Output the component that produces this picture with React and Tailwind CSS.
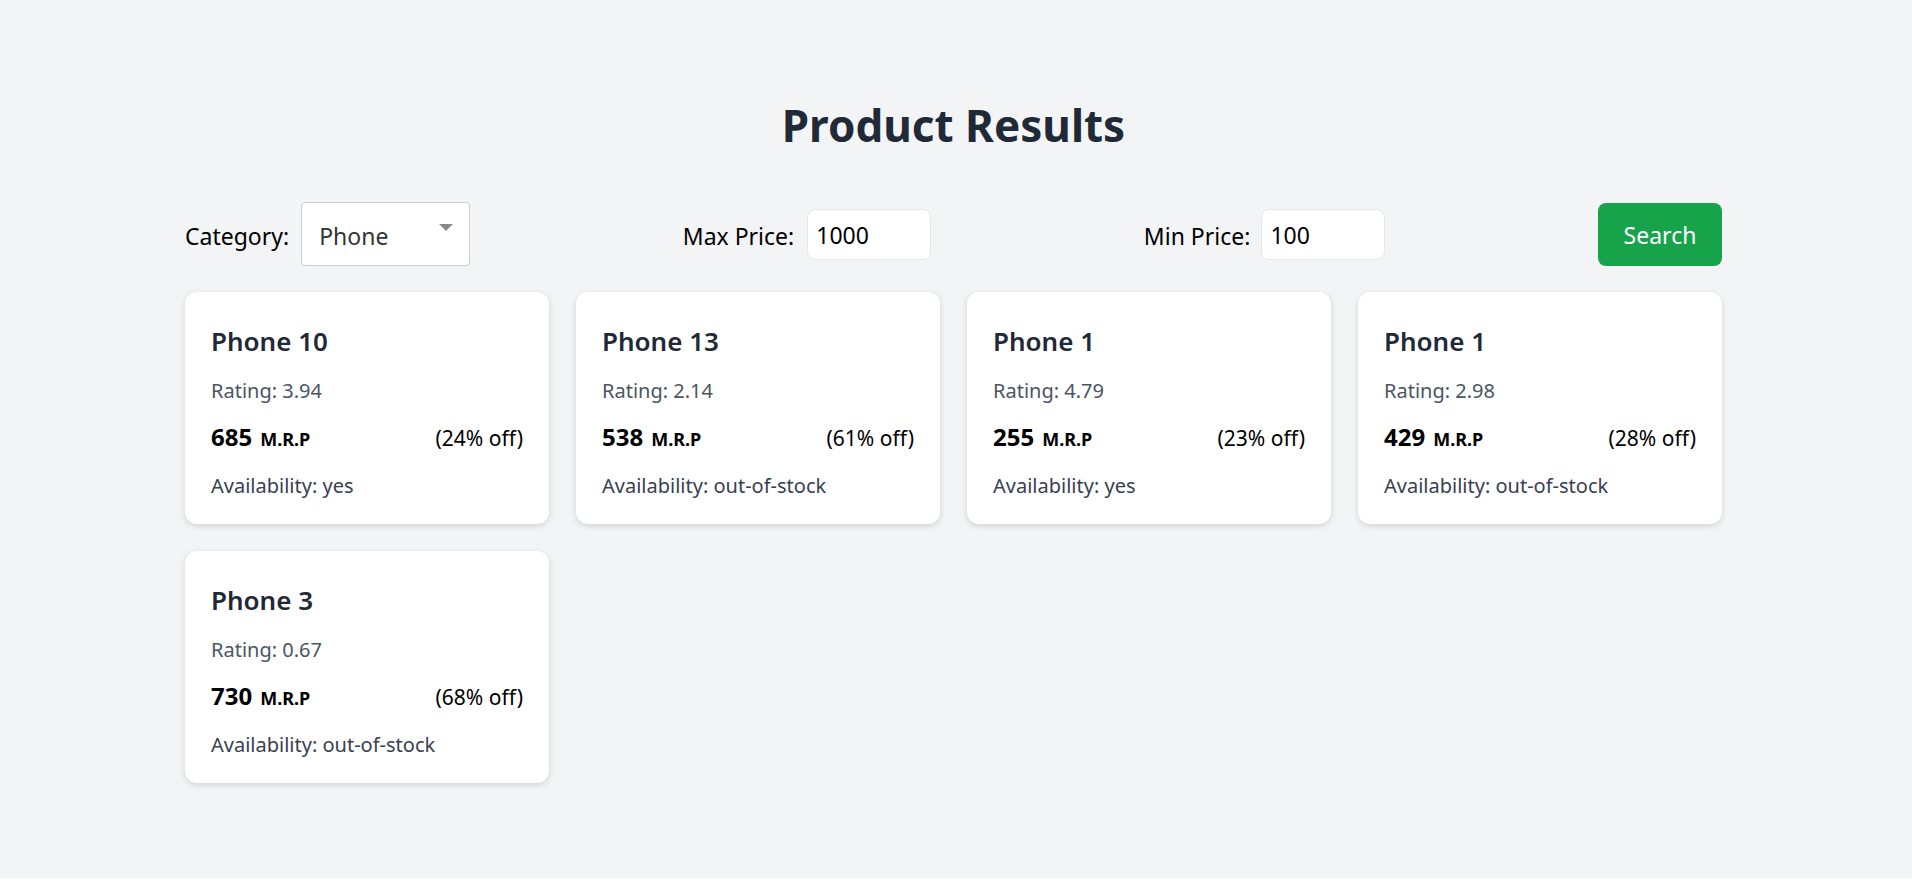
import React, { useState } from 'react';

const products = [
  { name: 'Phone 10', rating: 3.94, price: 685, discount: 24, availability: 'yes' },
  { name: 'Phone 13', rating: 2.14, price: 538, discount: 61, availability: 'out-of-stock' },
  { name: 'Phone 1', rating: 4.79, price: 255, discount: 23, availability: 'yes' },
  { name: 'Phone 1', rating: 2.98, price: 429, discount: 28, availability: 'out-of-stock' },
  { name: 'Phone 3', rating: 0.67, price: 730, discount: 68, availability: 'out-of-stock' },
];

const ProductCard = ({ p }) => (
  <div className="bg-white rounded-[12px] shadow-[0_2px_6px_rgba(0,0,0,0.14)] px-[26px] pt-[25px] pb-[24px]">
    <h2 className="text-[26px] leading-[48px] font-semibold text-[#1f2937]">{p.name}</h2>
    <p className="mt-[12px] text-[20px] leading-[28px] text-[#4b5563]">Rating: {p.rating}</p>
    <div className="mt-[17px] h-[32px] flex items-center justify-between">
      <span className="text-[24px] leading-[32px] font-bold text-black">
        {p.price}
        <span className="ml-[8px] text-[18px] font-bold">M.R.P</span>
      </span>
      <span className="text-[21px] leading-[28px] text-black">({p.discount}% off)</span>
    </div>
    <p className="mt-[18px] text-[20px] leading-[28px] text-[#374151]">Availability: {p.availability}</p>
  </div>
);

const App = () => {
  const [category, setCategory] = useState('Phone');
  const [maxPrice, setMaxPrice] = useState('1000');
  const [minPrice, setMinPrice] = useState('100');

  return (
    <div className="bg-[#f3f4f6] pt-[99px] pb-[95px] font-['Noto_Sans',sans-serif]">
      <div className="ml-[185px] w-[1537px]">
        <h1 className="text-center text-[44px] leading-[52px] font-bold text-[#1f2937]">Product Results</h1>

        {/* filters */}
        <div className="mt-[51px] h-[64px] flex items-center justify-between">
          <div className="flex items-center gap-[12px]">
            <label className="pt-[4px] text-[23px] text-black">Category:</label>
            <div className="relative w-[169px] h-[64px]">
              <select
                value={category}
                onChange={e => setCategory(e.target.value)}
                className="appearance-none w-full h-full bg-white border border-[#cccccc] rounded-[4px] pl-[17px] pt-[4px] text-[23px] text-[#333333] outline-none"
              >
                <option>Phone</option>
                <option>Laptop</option>
                <option>TV</option>
              </select>
              <svg className="absolute right-[17px] top-[22px] pointer-events-none" width="14" height="7" viewBox="0 0 14 7">
                <path d="M0 0 L14 0 L7 7 Z" fill="#8a8a8a" />
              </svg>
            </div>
          </div>

          <div className="flex items-center gap-[13px]">
            <label className="pt-[4px] text-[23px] text-black">Max Price:</label>
            <input
              value={maxPrice}
              onChange={e => setMaxPrice(e.target.value)}
              className="w-[124px] h-[51px] bg-white border border-[#e5e7eb] rounded-[8px] pl-[8px] pt-[2px] text-[23px] text-black outline-none"
            />
          </div>

          <div className="flex items-center gap-[11px]">
            <label className="pt-[4px] text-[23px] text-black">Min Price:</label>
            <input
              value={minPrice}
              onChange={e => setMinPrice(e.target.value)}
              className="w-[124px] h-[51px] bg-white border border-[#e5e7eb] rounded-[8px] pl-[8px] pt-[2px] text-[23px] text-black outline-none"
            />
          </div>

          <button className="w-[124px] h-[63px] pt-[3px] bg-[#16a34a] rounded-[8px] text-white text-[23px]">Search</button>
        </div>

        {/* results */}
        <div className="mt-[26px] grid grid-cols-4 gap-[27px]">
          {products.map((p, i) => <ProductCard key={i} p={p} />)}
        </div>
      </div>
    </div>
  );
};

export default App;
